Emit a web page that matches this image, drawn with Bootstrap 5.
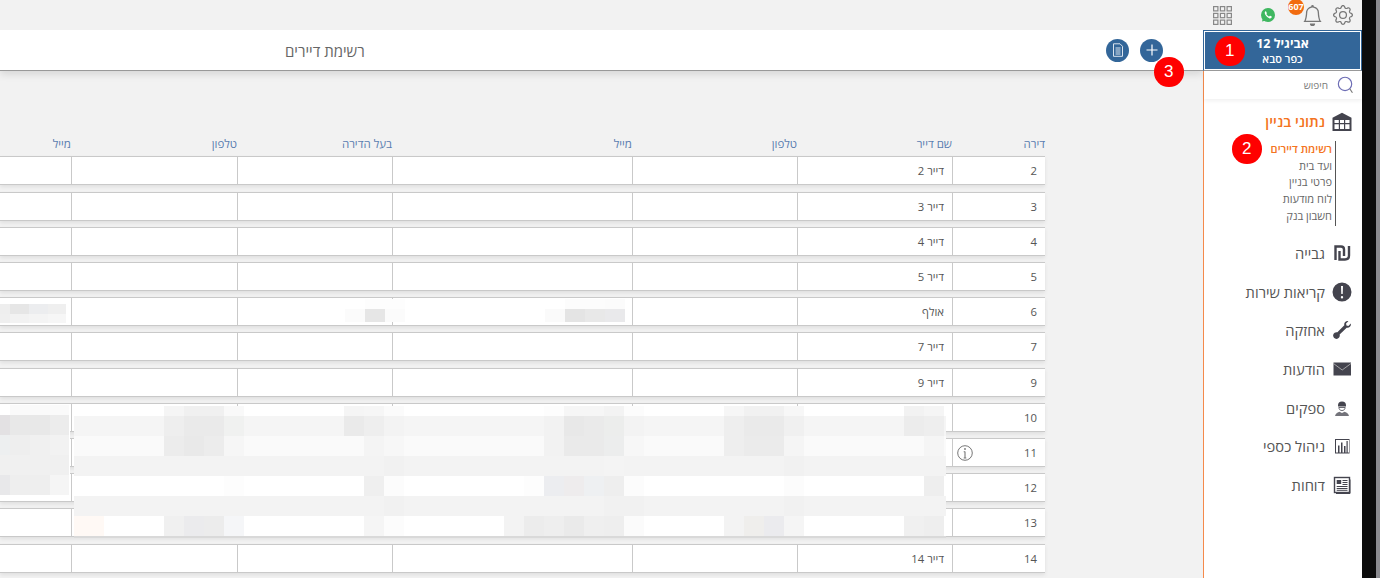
<!DOCTYPE html>
<html lang="he" dir="rtl">
<head>
<meta charset="utf-8">
<title>רשימת דיירים</title>
<link href="https://cdn.jsdelivr.net/npm/bootstrap@5.3.0/dist/css/bootstrap.min.css" rel="stylesheet">
<style>
html,body{height:100%;overflow:hidden}
body{background:#f2f2f2;font-family:"Open Sans","Liberation Sans",sans-serif;color:#555;position:relative}
.shell{height:578px}
.edge{width:18px;flex:none;background:#0c0c0c;border-right:4px solid #8b8b90}
.topstrip{height:30px;flex:none;background:#f2f2f2;padding-right:9px}
.ic-gear{width:20px;height:20px;color:#777}
.ic-bell{width:21px;height:21px;color:#777}
.bell-wrap{margin-right:10px;position:relative}
.count{position:absolute;right:19px;top:-6px;width:16px;height:16px;font-size:9px;font-weight:700;background:#f26b0f;color:#fff;line-height:16px}
.ic-wa{width:16px;height:16px;margin-right:26px}
.ic-apps{width:19px;height:19px;margin-right:28px;color:#888}
.sidebar{width:159px;flex:none;background:#fff;border-right:0;border-left:1px solid #f58a4b}
.bldg{height:41px;background:#336699;border:1px solid #336699;box-shadow:inset 0 0 0 1px #fff;border-bottom:1px solid #999;color:#fff;text-align:center;padding:4px 0 0 0;margin-left:-1px;position:relative}
.bldg b{display:block;font-size:12.5px;line-height:17px;font-weight:700}
.bldg span{display:block;font-size:11px;line-height:14px;font-weight:600}
.searchbox{height:28px;padding:0 9px 0 0;box-shadow:0 2px 4px rgba(0,0,0,.06);font-size:10px;color:#777}
.searchbox svg{width:17px;height:18px}
.menuarea{padding-top:13px}
.mlink{display:flex;align-items:center;gap:7px;padding-right:10px;color:#555;font-size:14.7px;height:38.6px;text-decoration:none}
.mlink svg{width:20px;height:20px;flex:none;color:#44444e}
.mlink.on{color:#f47421;font-weight:600;font-size:14.5px;height:20px}
.sublist{margin:9px 26px 8px 0;border-right:1px solid #555;padding:0 3px 0 0;font-size:11px;line-height:16.7px;height:85px}
.sublist a{display:block;color:#666;text-decoration:none}
.sublist a.on{color:#f47421;font-weight:600}
.workarea{position:relative;min-width:0;overflow:hidden}
.pagebar{height:41px;flex:none;background:#fff;border-bottom:1px solid #999;box-shadow:0 3px 8px rgba(0,0,0,.12);position:relative;padding-right:40px}
.pagebar h1{font-size:15px;font-weight:400;color:#666;margin:0;position:absolute;left:285px;top:11px;line-height:20px}
.rbtn{width:23px;height:23px;background:#336699;color:#fff;padding:0;border:0;display:flex;align-items:center;justify-content:center;border-radius:50%}
.rbtn svg{width:14px;height:14px}
.tablewrap{width:1045px;position:absolute;left:0;top:104.3px}
.dline{display:flex;width:1045px}
.hline{height:22px;font-size:11.5px;line-height:20px;color:#5a7db0}
.dline>div{flex:none;text-align:right}
.w1{width:93px}.w2{width:155px}.w3{width:165px}.w4{width:240px}.w5{width:155px}.w6{width:166px}.w7{width:71px}
.drow{height:29px;margin-bottom:6.22px;background:#fff;border-top:1px solid #c9c9c9;border-bottom:1px solid #c9c9c9;box-shadow:0 2px 4px rgba(0,0,0,.08);font-size:11.3px;line-height:27px;color:#555}
.drow>div{padding-right:8px;height:27px;border-left:1px solid #c9c9c9}
.drow>div:last-child{border-left:0}
.drow .w1{position:relative}
.infoi{position:absolute;left:4px;top:6px;width:16px;height:16px;color:#777}
.mosaic{position:absolute;left:0;top:0;width:1203px;height:578px;pointer-events:none}
.mosaic rect{shape-rendering:crispEdges}
.mosaic rect:not([width]){width:20px}
.mosaic rect:not([height]){height:20px}
.mark-a{position:absolute;width:29.5px;height:29.5px;background:#f00;color:#fff;font-family:"Liberation Sans",sans-serif;font-size:17px;line-height:29.5px;text-align:center}
.ma1{left:1215px;top:36px}.ma2{left:1232px;top:134px}.ma3{left:1154px;top:57px}
</style>
</head>
<body>
<div class="shell d-flex">
  <div class="edge"></div>
  <div class="flex-grow-1 d-flex flex-column" style="min-width:0">
    <div class="topstrip d-flex align-items-center">
      <svg class="ic-gear" viewBox="0 0 16 16" fill="currentColor"><path d="M8 4.754a3.246 3.246 0 1 0 0 6.492 3.246 3.246 0 0 0 0-6.492zM5.754 8a2.246 2.246 0 1 1 4.492 0 2.246 2.246 0 0 1-4.492 0z"/><path d="M9.796 1.343c-.527-1.79-3.065-1.79-3.592 0l-.094.319a.873.873 0 0 1-1.255.52l-.292-.16c-1.64-.892-3.433.902-2.54 2.541l.159.292a.873.873 0 0 1-.52 1.255l-.319.094c-1.79.527-1.79 3.065 0 3.592l.319.094a.873.873 0 0 1 .52 1.255l-.16.292c-.892 1.64.901 3.434 2.541 2.54l.292-.159a.873.873 0 0 1 1.255.52l.094.319c.527 1.79 3.065 1.79 3.592 0l.094-.319a.873.873 0 0 1 1.255-.52l.292.16c1.64.893 3.434-.902 2.54-2.541l-.159-.292a.873.873 0 0 1 .52-1.255l.319-.094c1.79-.527 1.79-3.065 0-3.592l-.319-.094a.873.873 0 0 1-.52-1.255l.16-.292c.893-1.64-.902-3.433-2.541-2.54l-.292.159a.873.873 0 0 1-1.255-.52l-.094-.319zm-2.633.283c.246-.835 1.428-.835 1.674 0l.094.319a1.873 1.873 0 0 0 2.693 1.115l.291-.16c.764-.415 1.6.42 1.184 1.185l-.159.292a1.873 1.873 0 0 0 1.116 2.692l.318.094c.835.246.835 1.428 0 1.674l-.319.094a1.873 1.873 0 0 0-1.115 2.693l.16.291c.415.764-.42 1.6-1.185 1.184l-.291-.159a1.873 1.873 0 0 0-2.693 1.116l-.094.318c-.246.835-1.428.835-1.674 0l-.094-.319a1.873 1.873 0 0 0-2.692-1.115l-.292.16c-.764.415-1.6-.42-1.184-1.185l.159-.291A1.873 1.873 0 0 0 1.945 8.93l-.319-.094c-.835-.246-.835-1.428 0-1.674l.319-.094A1.873 1.873 0 0 0 3.06 4.377l-.16-.292c-.415-.764.42-1.6 1.185-1.184l.292.159a1.873 1.873 0 0 0 2.692-1.115l.094-.319z"/></svg>
      <div class="bell-wrap d-flex">
        <svg class="ic-bell" viewBox="0 0 16 16" fill="currentColor"><path d="M8 16a2 2 0 0 0 2-2H6a2 2 0 0 0 2 2zM8 1.918l-.797.161A4.002 4.002 0 0 0 4 6c0 .628-.134 2.197-.459 3.742-.16.767-.376 1.566-.663 2.258h10.244c-.287-.692-.502-1.49-.663-2.258C12.134 8.197 12 6.628 12 6a4.002 4.002 0 0 0-3.203-3.92L8 1.917zM14.22 12c.223.447.481.801.78 1H1c.299-.199.557-.553.78-1C2.68 10.2 3 6.88 3 6c0-2.42 1.72-4.44 4.005-4.901a1 1 0 1 1 1.99 0A5.002 5.002 0 0 1 13 6c0 .88.32 4.2 1.22 6z"/></svg>
        <span class="count rounded-circle text-center">607</span>
      </div>
      <svg class="ic-wa" viewBox="0 0 16 16"><circle cx="8" cy="8" r="7" fill="#3fb760"/><path d="M2 14.500l1-4 3 3z" fill="#3fb760"/><path d="M5.600 4.200c-.5.3-1 1-.8 2 .3 1.700 2.700 4.600 4.800 5.200 1 .2 1.700-.4 2-.9.200-.5.200-.9.100-1l-1.500-.8c-.2-.1-.3 0-.5.200l-.6.700c-1-.3-2.300-1.500-2.800-2.600l.5-.6c.1-.2.1-.3 0-.5l-.7-1.500c-.1-.3-.3-.3-.5-.2z" fill="#fff"/></svg>
      <svg class="ic-apps" viewBox="0 0 19 19" fill="none" stroke="currentColor" stroke-width="1.200"><rect x=".6" y=".6" width="4.300" height="4.300"/><rect x="7.400" y=".6" width="4.300" height="4.300"/><rect x="14.100" y=".6" width="4.300" height="4.300"/><rect x=".6" y="7.400" width="4.300" height="4.300"/><rect x="7.400" y="7.400" width="4.300" height="4.300"/><rect x="14.100" y="7.400" width="4.300" height="4.300"/><rect x=".6" y="14.100" width="4.300" height="4.300"/><rect x="7.400" y="14.100" width="4.300" height="4.300"/><rect x="14.100" y="14.100" width="4.300" height="4.300"/></svg>
    </div>
    <div class="flex-grow-1 d-flex" style="min-height:0">
      <aside class="sidebar d-flex flex-column">
        <div class="bldg"><b>אביגיל 12</b><span>כפר סבא</span></div>
        <div class="searchbox d-flex align-items-center gap-2">
          <svg viewBox="0 0 16 17" fill="none" stroke="#6d6db5" stroke-width="1.100"><circle cx="8.500" cy="7.500" r="6.300"/><path d="M13 12l2.500 3.800" stroke="#777"/></svg>
          <span>חיפוש</span>
        </div>
        <nav class="menuarea">
          <a class="mlink on" href="#"><svg viewBox="0 0 20 20" fill="currentColor"><path fill-rule="evenodd" d="M10 .8L19.500 5.700V19H.5V5.700zM2.500 8v3h4.300V8zm5.500 0v3h4V8zm5.200 0v3h4.300V8zM2.500 12.300v4.700h4.300v-4.700zm5.500 0v4.700h4v-4.700zm5.200 0v4.700h4.300v-4.700z"/></svg><span>נתוני בניין</span></a>
          <div class="sublist">
            <a class="on" href="#">רשימת דיירים</a>
            <a href="#">ועד בית</a>
            <a href="#">פרטי בניין</a>
            <a href="#">לוח מודעות</a>
            <a href="#">חשבון בנק</a>
          </div>
          <a class="mlink" href="#"><svg viewBox="0 0 20 20" fill="none" stroke="currentColor" stroke-width="2.400"><path d="M3.500 17V3.500H9q3 0 3 3V13"/><path d="M7.500 8v8.500H13q4 0 4-4V3"/></svg><span>גבייה</span></a>
          <a class="mlink" href="#"><svg viewBox="0 0 20 20" fill="currentColor"><path fill-rule="evenodd" d="M10 .5a9.500 9.500 0 1 1 0 19 9.500 9.500 0 0 1 0-19zM9 4l.3 8h1.400L11 4zm1 10a1.200 1.200 0 1 0 0 2.400 1.200 1.200 0 0 0 0-2.400z"/></svg><span>קריאות שירות</span></a>
          <a class="mlink" href="#"><svg viewBox="-1 -1 18 18" fill="currentColor"><path transform="matrix(-1 0 0 1 16 0)" d="M.102 2.223A3.004 3.004 0 0 0 3.780 5.897l6.341 6.252A3.003 3.003 0 0 0 13 16a3 3 0 1 0-.851-5.878L5.897 3.781A3.004 3.004 0 0 0 2.223.1l2.141 2.142L4 4l-1.757.364L.102 2.223z"/></svg><span>אחזקה</span></a>
          <a class="mlink" href="#"><svg viewBox="0 0 20 20"><rect x="1.500" y="3.500" width="17.500" height="13" fill="currentColor"/><path d="M1.500 4.500l8.700 6.500 8.800-6.500" fill="none" stroke="#bbb" stroke-width=".8"/></svg><span>הודעות</span></a>
          <a class="mlink" href="#"><svg viewBox="0 0 20 20" fill="currentColor"><path d="M6 7.500a4 4 0 0 1 8 0v1H6z"/><path d="M6.800 9.500h6.400c-.3 2-1.300 3-3.200 3s-2.900-1-3.200-3z" fill="none" stroke="currentColor" stroke-width=".8"/><path d="M3 18c.5-3 3-4 4.500-4.300L10 15l2.500-1.300c1.500.3 4 1.300 4.500 4.300z" opacity=".75"/></svg><span>ספקים</span></a>
          <a class="mlink" href="#"><svg viewBox="0 0 20 20" fill="currentColor"><path fill-rule="evenodd" d="M3 3h14.500v14.500H3zM4 4v12.500h2V9.500h1.500v7H9V6.500h1.500v10H12V10h1.500v6.500h1V5h1.200v11.500h1.300V4z"/></svg><span>ניהול כספי</span></a>
          <a class="mlink" href="#"><svg viewBox="0 0 20 20" fill="none" stroke="currentColor"><rect x="2.500" y="2.500" width="15" height="15" stroke-width="1.400"/><path d="M18 4.500v14H4" stroke-width="1"/><rect x="4.700" y="5" width="4.500" height="4" fill="currentColor" stroke="none"/><path d="M10.500 5.500h5M10.500 7.500h5M10.500 9.500h5M4.700 11.500h10.800M4.700 13.500h10.800M4.700 15.300h10.800" stroke-width="1"/></svg><span>דוחות</span></a>
        </nav>
      </aside>
      <main class="workarea flex-grow-1">
        <header class="pagebar d-flex align-items-center gap-2">
          <button class="rbtn" type="button" aria-label="הוספה"><svg viewBox="0 0 14 14" fill="none" stroke="#fff" stroke-width="1.200"><path d="M7 1.500v11M1.500 7h11"/></svg></button>
          <button class="rbtn ms-0" type="button" aria-label="מסמך" style="margin-right:3px"><svg viewBox="0 0 14 14" fill="none" stroke="#dbe4ee" stroke-width="1"><path d="M2.500 .8h6.500l2.500 2.500v10H2.500z"/><path d="M4.500 5h5M4.500 7h5M4.500 9h5M4.500 11h5"/></svg></button>
          <h1>רשימת דיירים</h1>
        </header>
        <section class="tablewrap">
          <div class="dline hline"><div class="w1">דירה</div><div class="w2">שם דייר</div><div class="w3">טלפון</div><div class="w4">מייל</div><div class="w5">בעל הדירה</div><div class="w6">טלפון</div><div class="w7">מייל</div></div>
          <div class="dline drow"><div class="w1">2</div><div class="w2">דייר 2</div><div class="w3"></div><div class="w4"></div><div class="w5"></div><div class="w6"></div><div class="w7"></div></div>
          <div class="dline drow"><div class="w1">3</div><div class="w2">דייר 3</div><div class="w3"></div><div class="w4"></div><div class="w5"></div><div class="w6"></div><div class="w7"></div></div>
          <div class="dline drow"><div class="w1">4</div><div class="w2">דייר 4</div><div class="w3"></div><div class="w4"></div><div class="w5"></div><div class="w6"></div><div class="w7"></div></div>
          <div class="dline drow"><div class="w1">5</div><div class="w2">דייר 5</div><div class="w3"></div><div class="w4"></div><div class="w5"></div><div class="w6"></div><div class="w7"></div></div>
          <div class="dline drow"><div class="w1">6</div><div class="w2">אולף</div><div class="w3"></div><div class="w4"></div><div class="w5"></div><div class="w6"></div><div class="w7"></div></div>
          <div class="dline drow"><div class="w1">7</div><div class="w2">דייר 7</div><div class="w3"></div><div class="w4"></div><div class="w5"></div><div class="w6"></div><div class="w7"></div></div>
          <div class="dline drow"><div class="w1">9</div><div class="w2">דייר 9</div><div class="w3"></div><div class="w4"></div><div class="w5"></div><div class="w6"></div><div class="w7"></div></div>
          <div class="dline drow"><div class="w1">10</div><div class="w2"></div><div class="w3"></div><div class="w4"></div><div class="w5"></div><div class="w6"></div><div class="w7"></div></div>
          <div class="dline drow"><div class="w1">11<svg class="infoi" viewBox="0 0 16 16" fill="none" stroke="currentColor"><circle cx="8" cy="8" r="7.300"/><path d="M8 6.500v6.500M6.700 6.700H8M6.700 13h2.600" stroke-width="1.100"/><circle cx="8" cy="4" r=".9" fill="currentColor" stroke="none"/></svg></div><div class="w2"></div><div class="w3"></div><div class="w4"></div><div class="w5"></div><div class="w6"></div><div class="w7"></div></div>
          <div class="dline drow"><div class="w1">12</div><div class="w2"></div><div class="w3"></div><div class="w4"></div><div class="w5"></div><div class="w6"></div><div class="w7"></div></div>
          <div class="dline drow"><div class="w1">13</div><div class="w2"></div><div class="w3"></div><div class="w4"></div><div class="w5"></div><div class="w6"></div><div class="w7"></div></div>
          <div class="dline drow"><div class="w1">14</div><div class="w2">דייר 14</div><div class="w3"></div><div class="w4"></div><div class="w5"></div><div class="w6"></div><div class="w7"></div></div>
        </section>
      </main>
    </div>
  </div>
</div>

<svg class="mosaic" viewBox="0 0 1203 578" aria-hidden="true">
  <g transform="translate(0 299)"><rect x="345" width="60" height="23" fill="#fff"/><rect x="365" height="10" fill="#fdfdfd"/><rect x="385" height="10" fill="#fdfdfd"/></g>
  <g transform="translate(0 309)"><rect x="345" height="13" fill="#fbfbfb"/><rect x="365" height="13" fill="#e6e6e6"/><rect x="385" height="13" fill="#fbfbfb"/></g>
  <g transform="translate(0 299)"><rect x="565" height="10" fill="#fcfcfc"/><rect x="585" height="10" fill="#fcfcfc"/><rect x="605" height="10" fill="#fbfbfb"/></g>
  <g transform="translate(0 309)"><rect x="545" height="13" fill="#fafafa"/><rect x="565" height="13" fill="#e4e4e4"/><rect x="585" height="13" fill="#e8e8e8"/><rect x="605" height="13" fill="#e9e9eb"/></g>
  <g transform="translate(0 304)"><rect x="0" width="10" height="10" fill="#eeeeee"/><rect x="10" width="19" height="10" fill="#e6e6e6"/><rect x="29" width="19" height="10" fill="#ecedef"/><rect x="48" width="18" height="10" fill="#efefef"/></g>
  <g transform="translate(0 314)"><rect x="0" width="10" height="9" fill="#efefef"/><rect x="10" width="19" height="9" fill="#f2f2f2"/><rect x="29" width="19" height="9" fill="#f4f4f4"/><rect x="48" width="18" height="9" fill="#f6f6f6"/></g>
  <rect x="0" y="405" width="70" height="96" fill="#fff"/>
  <g transform="translate(0 405)"><rect x="10" width="59" height="10" fill="#fafafa"/></g>
  <g transform="translate(0 415)"><rect x="0" width="10" fill="#e3e1e3"/><rect x="10" fill="#e8e8e8"/><rect x="30" fill="#e8e8e8"/><rect x="50" width="19" fill="#ececec"/></g>
  <g transform="translate(0 435)"><rect x="0" width="10" fill="#edeff0"/><rect x="10" fill="#eeeeee"/><rect x="30" fill="#f0f0f0"/><rect x="50" width="19" fill="#f2f2f2"/></g>
  <g transform="translate(0 455)"><rect x="0" width="69" fill="#f0f0f0"/></g>
  <g transform="translate(0 475)"><rect x="0" width="10" fill="#e8e8ea"/><rect x="10" fill="#eeeeee"/><rect x="30" fill="#eeeeee"/><rect x="50" width="19" fill="#f5f5f5"/></g>
  <rect x="74" y="406" width="872" height="130" fill="#fff"/>
  <rect x="74" y="536" width="872" height="2" fill="#d9d9d9"/>
  <g transform="translate(0 406)"><rect x="164" height="10" fill="#f5f5f5"/><rect x="184" width="40" height="10" fill="#f0f0f0"/><rect x="224" height="10" fill="#f9f9f9"/><rect x="344" height="10" fill="#f5f5f5"/><rect x="364" height="10" fill="#f6f6f6"/><rect x="384" height="10" fill="#fbfbfb"/><rect x="544" height="10" fill="#fdfdfd"/><rect x="564" width="40" height="10" fill="#f6f6f6"/><rect x="604" height="10" fill="#f3f3f3"/><rect x="624" height="10" fill="#fcfcfc"/><rect x="724" height="10" fill="#f6f6f6"/><rect x="744" width="40" height="10" fill="#f1f1f1"/><rect x="784" height="10" fill="#f7f7f7"/><rect x="904" height="10" fill="#f2f2f2"/><rect x="924" height="10" fill="#f5f5f5"/></g>
  <g transform="translate(0 416)"><rect x="74" width="872" fill="#f5f5f5"/><rect x="164" fill="#eeeeee"/><rect x="184" fill="#eaeaea"/><rect x="204" fill="#eaeaea"/><rect x="224" fill="#f0f1f0"/><rect x="344" fill="#eaeaea"/><rect x="364" fill="#eeeeee"/><rect x="384" fill="#f3f3f3"/><rect x="544" fill="#f2f2f2"/><rect x="564" fill="#e8e8e8"/><rect x="584" fill="#eaeaea"/><rect x="604" fill="#ecedec"/><rect x="624" fill="#f3f3f3"/><rect x="724" fill="#eeeeee"/><rect x="744" width="40" fill="#eaeaea"/><rect x="784" fill="#f0f0f0"/><rect x="904" fill="#ececec"/><rect x="924" fill="#eeeeee"/></g>
  <g transform="translate(0 436)"><rect x="74" width="872" fill="#fafafa"/><rect x="164" fill="#ececec"/><rect x="184" fill="#e9e9e9"/><rect x="204" fill="#ececec"/><rect x="224" fill="#f6f6f6"/><rect x="364" fill="#f4f4f4"/><rect x="384" fill="#f7f7f7"/><rect x="544" fill="#f2f2f2"/><rect x="564" width="40" fill="#eaeaea"/><rect x="604" fill="#eceded"/><rect x="624" fill="#f7f7f7"/><rect x="724" fill="#eeeeee"/><rect x="744" width="40" fill="#ebebeb"/><rect x="784" fill="#f5f5f5"/><rect x="924" fill="#f5f5f5"/></g>
  <g transform="translate(0 456)"><rect x="74" width="872" fill="#f3f3f3"/><rect x="384" fill="#f1f1f1"/><rect x="784" fill="#f1f1f1"/><rect x="604" fill="#f4f4f4"/></g>
  <g transform="translate(0 476)"><rect x="224" fill="#fdfdfd"/><rect x="364" fill="#efefef"/><rect x="384" fill="#fcfcfc"/><rect x="524" fill="#fdfdfd"/><rect x="544" fill="#ecedf0"/><rect x="564" fill="#eeeced"/><rect x="584" fill="#eef0f2"/><rect x="604" fill="#eeeeee"/><rect x="624" fill="#fcfcfc"/><rect x="784" fill="#fcfcfc"/><rect x="924" fill="#eeeeee"/></g>
  <g transform="translate(0 496)"><rect x="74" width="872" fill="#f3f3f3"/><rect x="384" fill="#f1f1f1"/><rect x="604" width="40" fill="#f1f1f1"/><rect x="784" fill="#f1f1f1"/></g>
  <g transform="translate(0 516)"><rect x="74" width="30" fill="#fff9f5"/><rect x="164" fill="#f0f0f0"/><rect x="184" fill="#ebebed"/><rect x="204" fill="#ececec"/><rect x="224" fill="#f5f6f8"/><rect x="364" fill="#f5f5f5"/><rect x="384" fill="#fcfcfc"/><rect x="504" fill="#f3f3f3"/><rect x="524" fill="#ececec"/><rect x="544" fill="#eeeeee"/><rect x="564" fill="#eaeaea"/><rect x="584" fill="#efefef"/><rect x="604" fill="#eeeeee"/><rect x="624" fill="#fbfbfb"/><rect x="724" fill="#f3f3f3"/><rect x="744" fill="#efeeec"/><rect x="764" fill="#ebebee"/><rect x="784" fill="#f5f5f5"/><rect x="904" fill="#f0f0f0"/><rect x="924" fill="#eeeeee"/></g>
</svg>
<div class="mark-a ma1 rounded-circle">1</div>
<div class="mark-a ma2 rounded-circle">2</div>
<div class="mark-a ma3 rounded-circle">3</div>
<script src="https://cdn.jsdelivr.net/npm/bootstrap@5.3.0/dist/js/bootstrap.bundle.min.js"></script>
</body>
</html>
